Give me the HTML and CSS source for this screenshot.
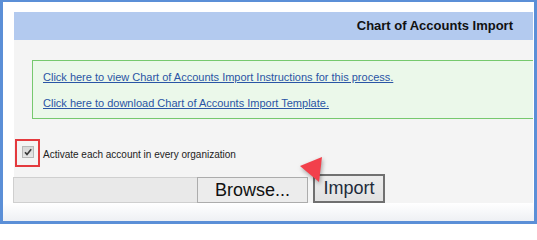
FILE: index.html
```html
<!DOCTYPE html>
<html>
<head>
<meta charset="utf-8">
<link rel="stylesheet" href="styles.css">
</head>
<body>
<div class="frame">
  <div class="panel">
    <div class="header">Chart of Accounts Import</div>
    <div class="info">
      <div class="line"><a href="#">Click here to view Chart of Accounts Import Instructions for this process.</a></div>
      <div class="line"><a href="#">Click here to download Chart of Accounts Import Template.</a></div>
    </div>
    <div class="check-row">
      <span class="highlight">
        <span class="checkbox">
          <svg width="10" height="10" viewBox="0 0 10 10"><path d="M2 5.2 L4 7.4 L8.2 2.2" fill="none" stroke="#3a3a3a" stroke-width="1.6"/></svg>
        </span>
      </span>
      <span class="check-label">Activate each account in every organization</span>
    </div>
    <div class="upload-row">
      <span class="file-field"></span>
      <span class="btn browse">Browse...</span>
      <span class="btn import">Import</span>
    </div>
  </div>
  <div class="footer"></div>
  <svg class="arrow" width="30" height="32" viewBox="0 0 30 32"><polygon points="2,11 24,2 21,27" fill="#f2404b"/></svg>
</div>
</body>
</html>
```
FILE: styles.css
```css
html, body {
  margin: 0;
  padding: 0;
}
body {
  font-family: "Liberation Sans", Arial, sans-serif;
}
.frame {
  position: relative;
  width: 537px;
  height: 224px;
  box-sizing: border-box;
  border-style: solid;
  border-color: #5b8fd7;
  border-width: 2px 3px 3px 3px;
  background: #ffffff;
  display: flex;
  flex-direction: column;
}
.panel {
  margin: 10px 1px 0 11px;
  background: #f4f4f4;
  display: flex;
  flex-direction: column;
}
.header {
  height: 28px;
  line-height: 28px;
  background: #b3caef;
  text-align: right;
  padding-right: 20px;
  font-size: 13px;
  font-weight: bold;
  color: #111;
}
.info {
  margin: 20px 0 0 18px;
  border: 1px solid #76c96e;
  border-right: none;
  background: #ebf8ea;
  padding: 3px 0 2px 10px;
}
.line {
  height: 26px;
  line-height: 26px;
  font-size: 11px;
}
.line a {
  color: #2a55a5;
  text-decoration: underline;
}
.check-row {
  margin-top: 20px;
  display: flex;
  align-items: center;
  height: 28px;
}
.highlight {
  margin-left: 1px;
  width: 25px;
  height: 28px;
  box-sizing: border-box;
  border: 2px solid #e43a3e;
  display: flex;
  align-items: center;
  justify-content: center;
}
.checkbox {
  width: 12px;
  height: 12px;
  box-sizing: border-box;
  border: 1px solid #b8b8b8;
  background: linear-gradient(#d6d6d6, #e6e6e6);
  display: flex;
  align-items: center;
  justify-content: center;
  margin-top: -3px;
}
.checkbox svg {
  display: block;
}
.check-label {
  margin-left: 3px;
  margin-top: 2px;
  font-size: 10px;
  color: #222;
}
.upload-row {
  margin-top: 7px;
  display: flex;
  align-items: flex-end;
  height: 29px;
}
.file-field {
  margin-left: -1px;
  width: 184px;
  height: 26px;
  box-sizing: border-box;
  background: #e9e9e9;
  border: 1px solid #cfcfcf;
  border-right: none;
}
.btn {
  box-sizing: border-box;
  display: flex;
  align-items: center;
  justify-content: center;
  font-size: 18px;
  color: #111;
}
.browse {
  width: 111px;
  height: 26px;
  background: #ececec;
  border: 1px solid #acacac;
}
.import {
  margin-left: 5px;
  width: 72px;
  height: 29px;
  background: linear-gradient(#ececec, #e2e2e2);
  border: 2px solid #707070;
  color: #1c2a3a;
}
.footer {
  flex: 1;
  background: linear-gradient(#ffffff, #eef0f4);
}
.arrow {
  position: absolute;
  left: 295px;
  top: 153px;
  filter: drop-shadow(1px 2px 2px rgba(0,0,0,0.35));
}
```
